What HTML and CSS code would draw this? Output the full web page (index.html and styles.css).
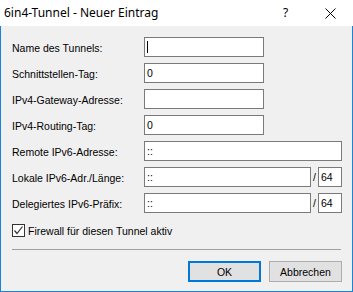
FILE: index.html
```html
<!DOCTYPE html>
<html>
<head>
<meta charset="utf-8">
<link rel="stylesheet" href="styles.css">
</head>
<body>
<div class="window">
  <div class="titlebar">
    <span class="title">6in4-Tunnel - Neuer Eintrag</span>
    <span class="help">?</span>
    <svg class="close" width="11" height="11" viewBox="0 0 11 11"><path d="M0.5 0.5 L10.5 10.5 M10.5 0.5 L0.5 10.5" stroke="#000" stroke-width="1" fill="none"/></svg>
  </div>
  <div class="content">
    <div class="form">
      <label class="lbl">Name des Tunnels:</label>
      <div class="field w120"><span class="caret"></span></div>
      <label class="lbl">Schnittstellen-Tag:</label>
      <div class="field w120">0</div>
      <label class="lbl">IPv4-Gateway-Adresse:</label>
      <div class="field w120"></div>
      <label class="lbl">IPv4-Routing-Tag:</label>
      <div class="field w120">0</div>
      <label class="lbl">Remote IPv6-Adresse:</label>
      <div class="field w198">::</div>
      <label class="lbl">Lokale IPv6-Adr./Länge:</label>
      <div class="pair"><div class="field w167">::</div><span class="slash">/</span><div class="field w24">64</div></div>
      <label class="lbl">Delegiertes IPv6-Präfix:</label>
      <div class="pair"><div class="field w167">::</div><span class="slash">/</span><div class="field w24">64</div></div>
    </div>
    <div class="check">
      <span class="box"><svg width="11" height="11" viewBox="0 0 11 11"><path d="M1.5 5.5 L4 8.5 L9.5 1.5" stroke="#333" stroke-width="1.2" fill="none"/></svg></span>
      <span class="check-text">Firewall für diesen Tunnel aktiv</span>
    </div>
    <div class="sep"></div>
    <div class="buttons">
      <div class="btn primary">OK</div>
      <div class="btn">Abbrechen</div>
    </div>
  </div>
</div>
</body>
</html>
```
FILE: styles.css
```css
* { box-sizing: border-box; }
html, body { margin: 0; padding: 0; background: #f0f0f0; }
.window {
  width: 353px;
  height: 292px;
  border: 1px solid #1883d7;
  border-top: none;
  background: #f0f0f0;
  font-family: "Liberation Sans", Arial, sans-serif;
  font-size: 10.5px;
  color: #000;
  display: flex;
  flex-direction: column;
}
.titlebar {
  height: 26px;
  background: #fff;
  margin: 0 -1px;
  position: relative;
  display: flex;
  align-items: center;
  padding-left: 4px;
}
.title {
  font-family: "Noto Sans", "Open Sans", sans-serif;
  font-size: 12px;
  color: #000;
  flex: 1;
  padding-bottom: 1px;
}
.help {
  font-family: "Noto Sans", sans-serif;
  font-size: 12px;
  width: 42px;
  padding-bottom: 1px;
}
.close { margin-right: 17px; }
.content {
  padding: 11px 10px 0 11px;
  display: flex;
  flex-direction: column;
}
.form {
  display: grid;
  grid-template-columns: 132px auto;
  grid-auto-rows: 20px;
  row-gap: 6px;
  align-items: center;
}
.lbl { line-height: 20px; padding-top: 1px; }
.field {
  height: 20px;
  border: 1px solid #7a7a7a;
  background: #fff;
  padding-left: 2px;
  line-height: 18px;
  position: relative;
}
.w120 { width: 120px; }
.w198 { width: 198px; }
.w167 { width: 167px; }
.w24 { width: 24px; }
.pair { display: flex; align-items: center; }
.slash { width: 7px; text-align: center; }
.caret {
  position: absolute;
  left: 2px;
  top: 3px;
  width: 1px;
  height: 12px;
  background: #000;
}
.check {
  margin-top: 11px;
  display: flex;
  align-items: center;
  height: 13px;
}
.box {
  width: 13px;
  height: 13px;
  border: 1px solid #333;
  background: #fff;
  display: flex;
  align-items: center;
  justify-content: center;
}
.check-text { margin-left: 3px; }
.sep {
  margin-top: 12px;
  height: 1px;
  background: #a0a0a0;
  width: 329px;
}
.buttons {
  margin-top: 11px;
  display: flex;
  justify-content: flex-end;
  gap: 8px;
  padding-right: 0;
}
.btn {
  width: 73px;
  height: 21px;
  border: 1px solid #adadad;
  background: #e1e1e1;
  display: flex;
  align-items: center;
  justify-content: center;
}
.btn.primary { border: 2px solid #0078d7; }
```
